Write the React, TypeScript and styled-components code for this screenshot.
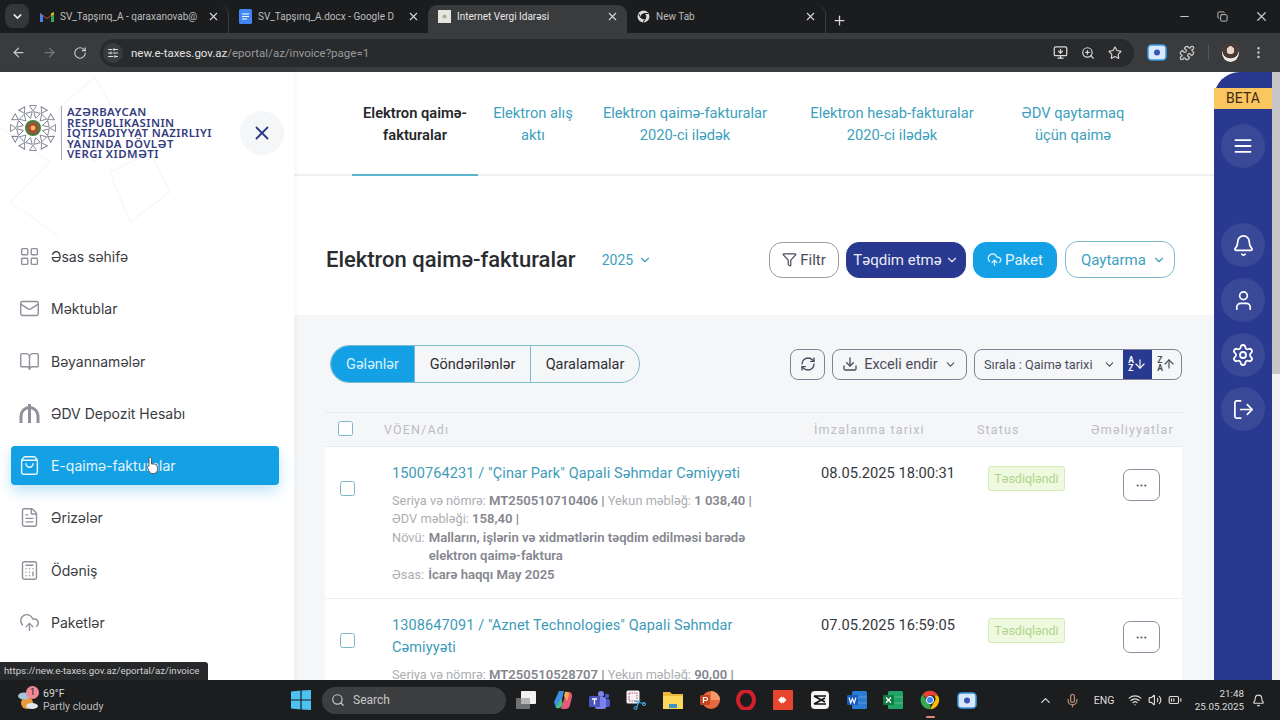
import React from "react";
import styled, { createGlobalStyle } from "styled-components";
import {
    AlignJustify,
    ArrowDown,
    ArrowLeft,
    ArrowRight,
    ArrowUp,
    Bell,
    BookOpen,
    Calculator,
    ChevronDown,
    ChevronUp,
    CloudUpload,
    Copy,
    Download,
    Ellipsis,
    FileText,
    Filter,
    LayoutGrid,
    LogOut,
    Mail,
    Mic,
    Minus,
    MoreVertical,
    Plus,
    Puzzle,
    RefreshCw,
    RotateCw,
    Search,
    Settings,
    ShoppingBag,
    SlidersHorizontal,
    Star,
    User,
    Volume2,
    Wifi,
    X,
    ZoomIn,
    MonitorDown,
    BatteryMedium,
} from "lucide-react";

const GlobalStyle = createGlobalStyle`
    html, body {
        margin: 0;
        padding: 0;
        background: #fff;
    }
    * {
        box-sizing: border-box;
    }
`;

const Screen = styled.div`
    width: 1280px;
    height: 720px;
    display: flex;
    flex-direction: column;
    overflow: hidden;
    position: relative;
    font-family: Roboto, "Liberation Sans", sans-serif;
`;

/* browser chrome */
const TabStrip = styled.div`
    height: 33px;
    background: #1b1c1e;
    display: flex;
    align-items: flex-end;
    padding-left: 5px;
    flex-shrink: 0;
`;

const TabSearch = styled.div`
    width: 24px;
    height: 24px;
    margin: 0 1px 5px 0;
    border-radius: 8px;
    background: #35363a;
    color: #e6e6e6;
    display: flex;
    align-items: center;
    justify-content: center;
`;

const BrowserTab = styled.div<{ $active?: boolean; $sep?: boolean }>`
    width: 199px;
    height: 28px;
    padding: 0 8px 5px 10px;
    display: flex;
    align-items: center;
    gap: 6px;
    font-size: 10px;
    color: ${(p) => (p.$active ? "#e8e8e8" : "#bdbdbd")};
    background: ${(p) => (p.$active ? "#3a3b3d" : "transparent")};
    border-radius: 9px 9px 0 0;
    border-right: ${(p) => (p.$sep ? "1px solid #3c3d3f" : "0")};
    flex-shrink: 0;
`;

const TabTitle = styled.span`
    flex: 1;
    white-space: nowrap;
    overflow: hidden;
`;

const TabClose = styled(X)`
    color: #d8d8d8;
    flex-shrink: 0;
`;

const NewTab = styled.div`
    margin: 0 0 5px 6px;
    color: #d8d8d8;
    display: flex;
`;

const WindowControls = styled.div`
    margin-left: auto;
    display: flex;
    align-items: center;
    gap: 26px;
    padding: 0 11px 9px 0;
    color: #c8c8c8;
`;

const ToolBar = styled.div`
    height: 39px;
    background: #3a3b3d;
    display: flex;
    align-items: center;
    padding: 0 8px 0 11px;
    color: #c9c9c9;
    flex-shrink: 0;
`;

const NavIcons = styled.div`
    display: flex;
    align-items: center;
    gap: 16px;
    width: 81px;
`;

const AddressBar = styled.div`
    width: 1034px;
    height: 28px;
    margin-left: 8px;
    padding: 0 12px 0 3px;
    background: #282a2c;
    border-radius: 14px;
    display: flex;
    align-items: center;
    font-size: 11.5px;
    color: #9a9b9d;
`;

const SiteChip = styled.div`
    width: 20px;
    height: 20px;
    margin-right: 8px;
    border-radius: 50%;
    background: #3a3b3d;
    color: #e0e0e0;
    display: flex;
    align-items: center;
    justify-content: center;
`;

const Host = styled.span`
    color: #e4e4e4;
`;

const AddressIcons = styled.div`
    margin-left: auto;
    display: flex;
    align-items: center;
    gap: 13px;
    color: #d8d8d8;
`;

const ToolRight = styled.div`
    margin-left: 13px;
    display: flex;
    align-items: center;
    gap: 12px;
`;

const ToolDivider = styled.div`
    width: 1px;
    height: 15px;
    margin: 0 1px;
    background: #55565a;
`;

const Avatar = styled.div`
    width: 17px;
    height: 19px;
    border-radius: 50%;
    background: radial-gradient(circle at 50% 38%, #e6d6c8 0 26%, #4a3a35 28% 55%, #ece8e3 58%);
`;

/* page */
const Body = styled.div`
    flex: 1;
    min-height: 0;
    display: flex;
    background: #fff;
`;

const Sidebar = styled.aside`
    width: 294px;
    flex-shrink: 0;
    position: relative;
    background: #fff;
    box-shadow: 1px 0 6px rgba(40, 50, 80, 0.05);
    z-index: 1;
`;

const SidebarArt = styled.svg`
    position: absolute;
    left: 0;
    top: 0;
`;

const LogoRow = styled.div`
    height: 165px;
    padding: 32px 11px 0 9px;
    display: flex;
    align-items: flex-start;
    position: relative;
`;

const LogoDivider = styled.div`
    width: 1px;
    height: 54px;
    margin: 2px 5px 0 4px;
    background: #a9abb5;
`;

const LogoText = styled.div`
    font-family: "Noto Sans", Roboto, sans-serif;
    font-size: 11.4px;
    line-height: 10.6px;
    font-weight: 600;
    letter-spacing: 0.42px;
    color: #343c80;
    text-transform: uppercase;
    padding-top: 3px;
    white-space: nowrap;
`;

const CloseBtn = styled.div`
    position: absolute;
    left: 240px;
    top: 39px;
    width: 44px;
    height: 44px;
    border-radius: 50%;
    background: #f5f6f8;
    color: #2f3a86;
    display: flex;
    align-items: center;
    justify-content: center;
`;

const Nav = styled.nav`
    display: flex;
    flex-direction: column;
    gap: 13.25px;
    padding: 0 15px 0 11px;
    position: relative;
`;

const NavItem = styled.div<{ $active?: boolean }>`
    height: 39px;
    padding-left: 8px;
    display: flex;
    align-items: center;
    gap: 11px;
    border-radius: 4px;
    font-family: Inter, Roboto, sans-serif;
    font-size: 14px;
    color: ${(p) => (p.$active ? "#e4f5fd" : "#3a3b42")};
    background: ${(p) => (p.$active ? "#14a0e4" : "transparent")};
    box-shadow: ${(p) => (p.$active ? "0 6px 14px rgba(20, 160, 228, 0.28)" : "none")};

    svg {
        color: ${(p) => (p.$active ? "#e9f7fe" : "#8f909c")};
        flex-shrink: 0;
    }
`;

const Cursor = styled.svg`
    position: absolute;
    left: 147px;
    top: 220px;
`;

const StatusBubble = styled.div`
    position: absolute;
    left: 0;
    top: 662px;
    width: 208px;
    height: 18px;
    padding-left: 4px;
    background: #27282a;
    border-radius: 0 3px 0 0;
    font-size: 9.7px;
    line-height: 18px;
    color: #cfd0d2;
    white-space: nowrap;
    z-index: 3;
`;

const Main = styled.main`
    flex: 1;
    min-width: 0;
    display: flex;
    flex-direction: column;
    overflow: hidden;
`;

const TopTabs = styled.div`
    height: 104px;
    flex-shrink: 0;
    padding-left: 58px;
    display: flex;
    border-bottom: 2px solid #eeeff1;
`;

const TopTab = styled.div<{ $active?: boolean; $w: number }>`
    width: ${(p) => p.$w}px;
    height: 104px;
    padding-top: 30px;
    text-align: center;
    font-size: 14.7px;
    line-height: 22px;
    font-weight: ${(p) => (p.$active ? 600 : 400)};
    color: ${(p) => (p.$active ? "#26272b" : "#3d9fbd")};
    border-bottom: 2px solid ${(p) => (p.$active ? "#5cb4cc" : "transparent")};
`;

const PageHeader = styled.div`
    height: 139px;
    flex-shrink: 0;
    padding: 28px 39px 0 32px;
    display: flex;
    align-items: center;
`;

const PageTitle = styled.h1`
    margin: 0;
    font-size: 22px;
    font-weight: 500;
    color: #2b2c30;
`;

const YearPicker = styled.div`
    margin-left: 26px;
    display: flex;
    align-items: center;
    gap: 5px;
    font-size: 14px;
    color: #3d9fbd;
`;

const HeaderActions = styled.div`
    margin-left: auto;
    display: flex;
    align-items: center;
    gap: 7px;
`;

const ActionBtn = styled.div<{ $w: number; $bg: string; $fg: string; $line: string }>`
    width: ${(p) => p.$w}px;
    height: 36px;
    border-radius: 13px;
    border: 1px solid ${(p) => p.$line};
    background: ${(p) => p.$bg};
    color: ${(p) => p.$fg};
    font-size: 15px;
    display: flex;
    align-items: center;
    justify-content: center;
    gap: 3px;
`;

const ReturnBtn = styled(ActionBtn)`
    height: 37px;
    justify-content: flex-start;
    padding-left: 15px;
    gap: 6px;
    margin-left: 1px;
`;

const Panel = styled.section`
    flex: 1;
    min-height: 0;
    background: #f5f6f8;
    padding: 30px 32px 0 31px;
    overflow: hidden;
`;

const PanelBar = styled.div`
    height: 38px;
    padding-left: 5px;
    display: flex;
    align-items: center;
`;

const Segments = styled.div`
    display: flex;
    height: 38px;
    border: 1px solid #7dbccf;
    border-radius: 19px;
    overflow: hidden;
`;

const Segment = styled.div<{ $w: number; $active?: boolean }>`
    width: ${(p) => p.$w}px;
    display: flex;
    align-items: center;
    justify-content: center;
    font-size: 14.5px;
    color: ${(p) => (p.$active ? "#d6f0fc" : "#2e2f33")};
    background: ${(p) => (p.$active ? "#14a0e4" : "transparent")};
    & + & {
        border-left: 1px solid #7dbccf;
    }
`;

const PanelTools = styled.div`
    margin-left: auto;
    display: flex;
    align-items: center;
    gap: 7px;
`;

const ToolBtn = styled.div<{ $w: number }>`
    width: ${(p) => p.$w}px;
    height: 31px;
    border: 1px solid #7f8296;
    border-radius: 8px;
    display: flex;
    align-items: center;
    justify-content: center;
    gap: 6px;
    font-size: 14.5px;
    color: #4a4c5c;
    svg {
        flex-shrink: 0;
    }
`;

const SortBox = styled.div`
    width: 208px;
    height: 31px;
    border: 1px solid #7f8296;
    border-radius: 8px;
    overflow: hidden;
    display: flex;
    align-items: center;
    font-size: 12.7px;
    color: #4a4c5c;
`;

const SortLabel = styled.div`
    flex: 1;
    padding: 0 7px 0 9px;
    display: flex;
    align-items: center;
    justify-content: space-between;
`;

const SortBtn = styled.div<{ $active?: boolean }>`
    width: 29px;
    height: 100%;
    display: flex;
    align-items: center;
    justify-content: center;
    background: ${(p) => (p.$active ? "#2a3990" : "transparent")};
    color: ${(p) => (p.$active ? "#fff" : "#4a4c5c")};
`;

const SortLetters = styled.span`
    display: flex;
    flex-direction: column;
    font-size: 8.5px;
    line-height: 8.5px;
    font-weight: 700;
    margin-right: -1px;
`;

const TableHead = styled.div`
    margin-top: 29px;
    height: 35px;
    display: flex;
    align-items: center;
    border-top: 1px solid #e9eaec;
    border-bottom: 1px solid #e9eaec;
    font-size: 12.5px;
    letter-spacing: 1.15px;
    color: #bcbdc2;
`;

const HeadCell = styled.div<{ $w: number }>`
    width: ${(p) => p.$w}px;
    flex-shrink: 0;
`;

const Check = styled.div<{ $head?: boolean }>`
    width: 15px;
    height: 15px;
    border: 1.3px solid #7ab8c8;
    border-radius: 2.5px;
    background: #fff;
    flex-shrink: 0;
    margin: ${(p) => (p.$head ? "-3px 31px 0 13px" : "33px 37px 0 15px")};
`;

const Row = styled.div`
    background: #fff;
    display: flex;
    align-items: flex-start;
    padding-top: 1px;
    border-bottom: 1px solid #eeeff1;
`;

const RowInfo = styled.div`
    width: 429px;
    flex-shrink: 0;
    padding: 15px 0 14px;
`;

const RowTitle = styled.div`
    font-size: 14.5px;
    line-height: 22px;
    letter-spacing: 0.1px;
    color: #3d9bb8;
    margin-bottom: 7px;
`;

const Meta = styled.div`
    font-size: 12.8px;
    line-height: 18.4px;
    color: #adaeb3;
    display: flex;
    gap: 4px;
`;

const MetaLine = styled.div`
    font-size: 12.8px;
    line-height: 18.4px;
    color: #adaeb3;
    white-space: nowrap;
`;

const Strong = styled.b`
    font-size: 13.1px;
    font-weight: 600;
    color: #85868f;
`;

const RowDate = styled.div`
    width: 167px;
    padding-top: 15px;
    font-size: 14.7px;
    line-height: 20px;
    color: #36373b;
    flex-shrink: 0;
`;

const Badge = styled.div`
    width: 77px;
    height: 25px;
    margin-top: 18px;
    background: #eff9df;
    border: 1px solid #d6ecb8;
    border-radius: 3px;
    font-size: 12.5px;
    line-height: 23px;
    text-align: center;
    color: #afd48a;
    flex-shrink: 0;
`;

const MoreBtn = styled.div`
    width: 37px;
    height: 32px;
    margin: 21px 0 0 58px;
    border: 1px solid #8c8e9c;
    border-radius: 7px;
    color: #5a5c68;
    display: flex;
    align-items: center;
    justify-content: center;
    flex-shrink: 0;
`;

const Rail = styled.aside`
    width: 58px;
    flex-shrink: 0;
    background: #2a3990;
    border-top-left-radius: 26px;
    padding-top: 16px;
    display: flex;
    flex-direction: column;
    align-items: center;
`;

const BetaTag = styled.div`
    width: 100%;
    height: 21px;
    background: #fbc660;
    color: #3b2a10;
    font-size: 14px;
    line-height: 21px;
    text-align: center;
`;

const RailBtn = styled.div<{ $gap: number }>`
    width: 44px;
    height: 44px;
    margin-top: ${(p) => p.$gap}px;
    border-radius: 50%;
    background: rgba(255, 255, 255, 0.08);
    color: #fff;
    display: flex;
    align-items: center;
    justify-content: center;
`;

const ScrollTrack = styled.div`
    width: 8px;
    flex-shrink: 0;
    background: #f1f1f1;
`;

const ScrollThumb = styled.div`
    height: 302px;
    background: #c6c6c6;
`;

/* taskbar */
const Taskbar = styled.footer`
    height: 40px;
    flex-shrink: 0;
    background: #1c1d1f;
    display: flex;
    align-items: center;
    color: #e8e8e8;
    position: relative;
`;

const Weather = styled.div`
    width: 291px;
    padding-left: 17px;
    display: flex;
    align-items: center;
    gap: 4px;
    font-size: 10.5px;
    line-height: 13.5px;
    color: #d8d8d8;
    position: relative;
`;

const WeatherBadge = styled.span`
    position: absolute;
    left: 26px;
    top: -1px;
    width: 13px;
    height: 13px;
    border-radius: 50%;
    background: #ef8a94;
    color: #2a1a1a;
    font-size: 9px;
    line-height: 13px;
    text-align: center;
`;

const WeatherSub = styled.div`
    color: #b9b9b9;
`;

const Apps = styled.div`
    display: flex;
    align-items: center;
`;

const AppSlot = styled.div<{ $on?: boolean }>`
    width: 36.7px;
    height: 40px;
    display: flex;
    align-items: center;
    justify-content: center;
    position: relative;
    &::after {
        content: "";
        display: ${(p) => (p.$on ? "block" : "none")};
        position: absolute;
        bottom: 2px;
        left: 14px;
        width: 9px;
        height: 2px;
        border-radius: 1px;
        background: #e08a78;
    }
`;

const SearchBox = styled.div`
    width: 184px;
    height: 27px;
    margin: 0 2px 0 11px;
    padding-left: 9px;
    border-radius: 14px;
    background: #3d3e40;
    display: flex;
    align-items: center;
    gap: 8px;
    font-size: 12px;
    color: #c8c8c8;
`;

const Tray = styled.div`
    position: absolute;
    left: 1037px;
    top: 0;
    height: 40px;
    display: flex;
    align-items: center;
    color: #dcdcdc;
`;

const TraySlot = styled.div<{ $w: number; $ml?: number }>`
    width: ${(p) => p.$w}px;
    margin-left: ${(p) => p.$ml ?? 0}px;
    display: flex;
    justify-content: center;
    font-size: 10.5px;
`;

const Clock = styled.div`
    width: 56px;
    margin-left: 3px;
    text-align: right;
    font-size: 9.8px;
    line-height: 13px;
`;

const GmailIcon = () => (
    <svg width="14" height="12" viewBox="0 0 14 12">
        <path d="M0 2 L7 7 L14 2 V11 H11 V5 L7 8 L3 5 V11 H0 Z" fill="#ea4335" />
        <path d="M0 2 V11 H3 V5 Z" fill="#4285f4" />
        <path d="M14 2 V11 H11 V5 Z" fill="#34a853" />
        <path d="M11 2.5 L14 1 V3 L11 5 Z" fill="#fbbc04" />
    </svg>
);

const DocsIcon = () => (
    <svg width="13" height="15" viewBox="0 0 13 15">
        <rect width="13" height="15" rx="1.5" fill="#4285f4" />
        <path d="M3 5h7M3 7.5h7M3 10h5" stroke="#fff" strokeWidth="1.2" />
    </svg>
);

const PageFavicon = () => (
    <svg width="13" height="13" viewBox="0 0 13 13">
        <rect width="13" height="13" fill="#e6e6df" />
        <circle cx="6.5" cy="6.5" r="2" fill="#a8ad93" />
    </svg>
);

const ChromeIcon = ({ size = 13 }: { size?: number }) => (
    <svg width={size} height={size} viewBox="0 0 24 24">
        <path d="M12 1a11 11 0 0 1 9.5 5.5H12a5.5 5.5 0 0 0-5 3.2L3.3 5A11 11 0 0 1 12 1z" fill="#ea4335" />
        <path d="M21.5 6.5A11 11 0 0 1 12 23l4.7-8.2a5.5 5.5 0 0 0 0-8.3z" fill="#fbbc04" />
        <path d="M3.3 5L8 13.2a5.5 5.5 0 0 0 5 4.2L12 23A11 11 0 0 1 3.3 5z" fill="#34a853" />
        <circle cx="12" cy="12" r="4.4" fill="#4285f4" stroke="#fff" strokeWidth="1.2" />
    </svg>
);

const GreyChromeIcon = () => (
    <svg width="13" height="13" viewBox="0 0 24 24">
        <circle cx="12" cy="12" r="11" fill="#d8d8d8" />
        <circle cx="12" cy="12" r="5" fill="#1b1c1e" />
        <path d="M12 6.5h9M7.5 15L3 7M16 15l-4.5 7.5" stroke="#1b1c1e" strokeWidth="1.8" />
    </svg>
);

const Emblem = () => {
    const outer = Array.from({ length: 12 }, (_, i) => i * 30);
    const inner = Array.from({ length: 12 }, (_, i) => i * 30 + 15);
    return (
        <svg width="48" height="48" viewBox="0 0 48 48">
            {outer.map((a) => (
                <path
                    key={a}
                    transform={`rotate(${a} 24 24)`}
                    d="M20.5 1.5 L27.5 1.5 L24 7 Z"
                    fill="none"
                    stroke="#7f8292"
                    strokeWidth="0.9"
                />
            ))}
            {inner.map((a) => (
                <path
                    key={a}
                    transform={`rotate(${a} 24 24)`}
                    d="M20.5 8 L27.5 8 L24 14 Z"
                    fill="none"
                    stroke="#7f8292"
                    strokeWidth="0.9"
                />
            ))}
            <circle cx="24" cy="24" r="8" fill="#4f7a3a" />
            <circle cx="24" cy="24" r="5.2" fill="#b8433a" />
            <circle cx="24" cy="24" r="2.4" fill="#e9c65a" />
        </svg>
    );
};

const DramIcon = () => (
    <svg width="21" height="21" viewBox="0 0 21 21" fill="none" stroke="currentColor" strokeWidth="3">
        <path d="M2 20 V13 A8.5 8.5 0 0 1 19 13 V20" />
        <path d="M10.5 1 V20" />
    </svg>
);

const HandCursor = () => (
    <Cursor width="11" height="17" viewBox="0 0 11 17">
        <path
            d="M2 1.5 a1.2 1.2 0 0 1 2.4 0 V7 h3 a3 3 0 0 1 3 3 v3 a3.5 3.5 0 0 1-3.5 3.5 H5 a3 3 0 0 1-2.6-1.6 L.5 10.5 C0 9 1.4 8.4 2 9.4 Z"
            fill="#fff"
            stroke="#3a3b42"
            strokeWidth="0.8"
        />
    </Cursor>
);

const WinLogo = () => (
    <svg width="20" height="20" viewBox="0 0 20 20">
        <path d="M0 1.5 L9.4 0.6 V9.4 H0 Z M10.6 0.5 L20 0 V9.4 H10.6 Z M0 10.6 H9.4 V19.4 L0 18.5 Z M10.6 10.6 H20 V20 L10.6 19.5 Z" fill="#4cc2f1" />
    </svg>
);

const TaskView = () => (
    <svg width="20" height="18" viewBox="0 0 20 18">
        <rect x="0" y="7" width="14" height="11" rx="1" fill="#6f7072" />
        <rect x="5" y="0" width="15" height="13" rx="1" fill="#f2f2f2" />
        <rect x="5" y="7" width="9" height="6" fill="#b5b5b5" />
    </svg>
);

const Copilot = () => (
    <svg width="20" height="20" viewBox="0 0 20 20">
        <path d="M6 1 H11 L8 14 A5 5 0 0 1 3 18 L1 12 Z" fill="#3f8fe8" />
        <path d="M3 18 C6 19 9 18 10 14 L8 8 L5 14 Z" fill="#48c07a" />
        <path d="M14 2 A4 4 0 0 1 19 7 L17 15 A5 5 0 0 1 12 19 H8 L12 6 Z" fill="#e8587a" />
        <path d="M12 2 C14 1 16 2 16 5 L14 11 L11 6 Z" fill="#f0b23f" />
    </svg>
);

const Teams = () => (
    <svg width="21" height="19" viewBox="0 0 21 19">
        <circle cx="12" cy="3" r="3" fill="#7b83eb" />
        <circle cx="18" cy="5" r="2.2" fill="#5059c9" />
        <rect x="14" y="8" width="7" height="8" rx="2" fill="#5059c9" />
        <rect x="6" y="6" width="11" height="12" rx="2" fill="#7b83eb" />
        <rect x="0" y="5" width="11" height="11" rx="1.5" fill="#4b53bc" />
        <path d="M3 8 H8 M5.5 8 V13.5" stroke="#fff" strokeWidth="1.4" />
    </svg>
);

const Snip = () => (
    <svg width="20" height="20" viewBox="0 0 20 20" fill="none">
        <rect x="0.5" y="0.5" width="13" height="13" rx="1.5" fill="#f4f4f4" />
        <rect x="3" y="3" width="8" height="8" fill="#f4f4f4" stroke="#c0455a" strokeDasharray="1.5 1" />
        <path d="M10 19 L14 9 M19 14 L8 11" stroke="#38a9d8" strokeWidth="1.2" />
        <circle cx="9.5" cy="18" r="1.6" stroke="#38a9d8" />
        <circle cx="18" cy="14" r="1.6" stroke="#38a9d8" />
    </svg>
);

const Folder = () => (
    <svg width="20" height="18" viewBox="0 0 20 18">
        <path d="M0 1 H7 L9 3 H20 V17 H0 Z" fill="#e8b93a" />
        <rect y="5" width="20" height="13" fill="#fbd85c" />
        <rect x="6" y="13" width="8" height="4" fill="#3d91c8" />
    </svg>
);

const Ppt = () => (
    <svg width="20" height="20" viewBox="0 0 20 20">
        <circle cx="11" cy="10" r="9" fill="#e8693f" />
        <path d="M11 1 A9 9 0 0 1 20 10 H11 Z" fill="#f39a6b" />
        <rect x="0" y="5" width="10" height="10" rx="1.5" fill="#c4441f" />
        <path d="M3.5 13 V7.5 H6 A1.5 1.5 0 0 1 6 10.5 H3.5" fill="none" stroke="#fff" strokeWidth="1.2" />
    </svg>
);

const Opera = () => (
    <svg width="20" height="20" viewBox="0 0 20 20">
        <ellipse cx="10" cy="10" rx="8" ry="9" fill="none" stroke="#d3202c" strokeWidth="4" />
    </svg>
);

const AnyDesk = () => (
    <svg width="20" height="20" viewBox="0 0 20 20">
        <rect width="20" height="20" rx="1" fill="#e8452f" />
        <path d="M5 10 L8.5 6.5 L12 10 L8.5 13.5 Z M10 6.5 L13.5 10 L10 13.5" fill="#fff" />
    </svg>
);

const CapCut = () => (
    <svg width="18" height="18" viewBox="0 0 18 18">
        <rect width="18" height="18" rx="4" fill="#f5f5f5" />
        <path d="M3 5 L14 11 M3 13 L14 7 M3 5 H15 M3 13 H15" stroke="#111" strokeWidth="1.7" fill="none" />
    </svg>
);

const OfficeDoc = ({ back, front, letter }: { back: string; front: string; letter: string }) => (
    <svg width="20" height="20" viewBox="0 0 20 20">
        <rect x="5" y="1" width="15" height="18" rx="1.5" fill={back} />
        <path d="M5 7 H20 M5 13 H20" stroke="rgba(255,255,255,.25)" />
        <rect x="0" y="5" width="11" height="10" rx="1.2" fill={front} />
        {letter === "W" ? (
            <path d="M2 7.5 L3.7 13 L5.5 8.5 L7.2 13 L9 7.5" fill="none" stroke="#fff" strokeWidth="1.1" />
        ) : (
            <path d="M3 7.5 L8 12.8 M8 7.5 L3 12.8" fill="none" stroke="#fff" strokeWidth="1.3" />
        )}
    </svg>
);

const Recorder = () => (
    <svg width="20" height="17" viewBox="0 0 20 17">
        <rect x="1" y="1" width="18" height="15" rx="3.5" fill="#dbe8fb" stroke="#3a9ae0" strokeWidth="1.6" />
        <circle cx="10" cy="8.5" r="3" fill="#3656b8" />
    </svg>
);

const SidebarPattern = () => (
    <SidebarArt width="294" height="165" viewBox="0 0 294 165" fill="none" stroke="#f8f8fa" strokeWidth="1.5">
        <path d="M60 35 L95 5 L120 50 L95 90 L60 70 Z" />
        <path d="M0 55 L50 90 L10 130 L60 165" />
        <path d="M110 100 L150 80 L170 120 L130 150 Z" />
    </SidebarArt>
);

const navItems = [
    { label: "Əsas səhifə", icon: <LayoutGrid size={21} strokeWidth={1.6} /> },
    { label: "Məktublar", icon: <Mail size={21} strokeWidth={1.6} /> },
    { label: "Bəyannamələr", icon: <BookOpen size={21} strokeWidth={1.6} /> },
    { label: "ƏDV Depozit Hesabı", icon: <DramIcon /> },
    { label: "E-qaimə-fakturalar", icon: <ShoppingBag size={21} strokeWidth={1.6} />, active: true },
    { label: "Ərizələr", icon: <FileText size={21} strokeWidth={1.6} /> },
    { label: "Ödəniş", icon: <Calculator size={21} strokeWidth={1.6} /> },
    { label: "Paketlər", icon: <CloudUpload size={21} strokeWidth={1.6} /> },
];

const topTabs = [
    { lines: ["Elektron qaimə-", "fakturalar"], w: 126, active: true },
    { lines: ["Elektron alış", "aktı"], w: 110 },
    { lines: ["Elektron qaimə-fakturalar", "2020-ci ilədək"], w: 194 },
    { lines: ["Elektron hesab-fakturalar", "2020-ci ilədək"], w: 220 },
    { lines: ["ƏDV qaytarmaq", "üçün qaimə"], w: 142 },
];

const taskApps = [
    <TaskView key="tv" />,
    <Copilot key="co" />,
    <Teams key="te" />,
    <Snip key="sn" />,
    <Folder key="fo" />,
    <Ppt key="pp" />,
    <Opera key="op" />,
    <AnyDesk key="an" />,
    <CapCut key="cc" />,
    <OfficeDoc key="wo" back="#2b7cd3" front="#185abd" letter="W" />,
    <OfficeDoc key="ex" back="#21a366" front="#107c41" letter="X" />,
];

export default function App() {
    return (
        <Screen>
            <GlobalStyle />
            <TabStrip>
                <TabSearch>
                    <ChevronDown size={13} strokeWidth={3} />
                </TabSearch>
                <BrowserTab $sep>
                    <GmailIcon />
                    <TabTitle>SV_Tapşırıq_A - qaraxanovab@</TabTitle>
                    <TabClose size={13} />
                </BrowserTab>
                <BrowserTab>
                    <DocsIcon />
                    <TabTitle>SV_Tapşırıq_A.docx - Google D</TabTitle>
                    <TabClose size={13} />
                </BrowserTab>
                <BrowserTab $active>
                    <PageFavicon />
                    <TabTitle>İnternet Vergi İdarəsi</TabTitle>
                    <TabClose size={13} />
                </BrowserTab>
                <BrowserTab $sep>
                    <GreyChromeIcon />
                    <TabTitle>New Tab</TabTitle>
                    <TabClose size={13} />
                </BrowserTab>
                <NewTab>
                    <Plus size={15} />
                </NewTab>
                <WindowControls>
                    <Minus size={13} />
                    <Copy size={11} />
                    <X size={15} />
                </WindowControls>
            </TabStrip>
            <ToolBar>
                <NavIcons>
                    <ArrowLeft size={15} />
                    <ArrowRight size={15} color="#77787a" />
                    <RotateCw size={14} />
                </NavIcons>
                <AddressBar>
                    <SiteChip>
                        <SlidersHorizontal size={12} />
                    </SiteChip>
                    <span>
                        <Host>new.e-taxes.gov.az</Host>/eportal/az/invoice?page=1
                    </span>
                    <AddressIcons>
                        <MonitorDown size={15} />
                        <ZoomIn size={14} />
                        <Star size={14} />
                    </AddressIcons>
                </AddressBar>
                <ToolRight>
                    <Recorder />
                    <Puzzle size={16} />
                    <ToolDivider />
                    <Avatar />
                    <MoreVertical size={15} />
                </ToolRight>
            </ToolBar>
            <Body>
                <Sidebar>
                    <SidebarPattern />
                    <LogoRow>
                        <Emblem />
                        <LogoDivider />
                        <LogoText>
                            Azərbaycan
                            <br />
                            Respublikasının
                            <br />
                            İqtisadiyyat Nazirliyi
                            <br />
                            yanında Dövlət
                            <br />
                            Vergi Xidməti
                        </LogoText>
                        <CloseBtn>
                            <X size={22} strokeWidth={2} />
                        </CloseBtn>
                    </LogoRow>
                    <Nav>
                        {navItems.map((item) => (
                            <NavItem key={item.label} $active={item.active}>
                                {item.icon}
                                {item.label}
                            </NavItem>
                        ))}
                        <HandCursor />
                    </Nav>
                </Sidebar>
                <Main>
                    <TopTabs>
                        {topTabs.map((tab) => (
                            <TopTab key={tab.lines[0]} $w={tab.w} $active={tab.active}>
                                {tab.lines[0]}
                                <br />
                                {tab.lines[1]}
                            </TopTab>
                        ))}
                    </TopTabs>
                    <PageHeader>
                        <PageTitle>Elektron qaimə-fakturalar</PageTitle>
                        <YearPicker>
                            2025 <ChevronDown size={14} />
                        </YearPicker>
                        <HeaderActions>
                            <ActionBtn $w={70} $bg="#fff" $fg="#4a4c5c" $line="#9a9ba3">
                                <Filter size={15} /> Filtr
                            </ActionBtn>
                            <ActionBtn $w={120} $bg="#2a3990" $fg="#e8eaf6" $line="#2a3990">
                                Təqdim etmə
                                <ChevronDown size={14} />
                            </ActionBtn>
                            <ActionBtn $w={84} $bg="#14a0e4" $fg="#e4f5fd" $line="#14a0e4">
                                <CloudUpload size={15} /> Paket
                            </ActionBtn>
                            <ReturnBtn $w={110} $bg="#fff" $fg="#3d9fbd" $line="#7dbccf">
                                Qaytarma
                                <ChevronDown size={14} />
                            </ReturnBtn>
                        </HeaderActions>
                    </PageHeader>
                    <Panel>
                        <PanelBar>
                            <Segments>
                                <Segment $w={83} $active>
                                    Gələnlər
                                </Segment>
                                <Segment $w={116}>Göndərilənlər</Segment>
                                <Segment $w={109}>Qaralamalar</Segment>
                            </Segments>
                            <PanelTools>
                                <ToolBtn $w={35}>
                                    <RefreshCw size={16} />
                                </ToolBtn>
                                <ToolBtn $w={135}>
                                    <Download size={16} /> Exceli endir <ChevronDown size={13} />
                                </ToolBtn>
                                <SortBox>
                                    <SortLabel>
                                        Sırala : Qaimə tarixi <ChevronDown size={13} />
                                    </SortLabel>
                                    <SortBtn $active>
                                        <SortLetters>
                                            <span>A</span>
                                            <span>Z</span>
                                        </SortLetters>
                                        <ArrowDown size={14} />
                                    </SortBtn>
                                    <SortBtn>
                                        <SortLetters>
                                            <span>Z</span>
                                            <span>A</span>
                                        </SortLetters>
                                        <ArrowUp size={14} />
                                    </SortBtn>
                                </SortBox>
                            </PanelTools>
                        </PanelBar>
                        <TableHead>
                            <Check $head />
                            <HeadCell $w={430}>VÖEN/Adı</HeadCell>
                            <HeadCell $w={163}>İmzalanma tarixi</HeadCell>
                            <HeadCell $w={114}>Status</HeadCell>
                            <HeadCell $w={91}>Əməliyyatlar</HeadCell>
                        </TableHead>
                        <Row>
                            <Check />
                            <RowInfo>
                                <RowTitle>1500764231 / "Çinar Park" Qapali Səhmdar Cəmiyyəti</RowTitle>
                                <MetaLine>
                                    Seriya və nömrə: <Strong>MT250510710406 |</Strong> Yekun məbləğ:{" "}
                                    <Strong>1 038,40 |</Strong>
                                </MetaLine>
                                <MetaLine>
                                    ƏDV məbləği: <Strong>158,40 |</Strong>
                                </MetaLine>
                                <Meta>
                                    <span>Növü:</span>
                                    <Strong>
                                        Malların, işlərin və xidmətlərin təqdim edilməsi barədə
                                        <br />
                                        elektron qaimə-faktura
                                    </Strong>
                                </Meta>
                                <Meta>
                                    <span>Əsas:</span>
                                    <Strong>İcarə haqqı May 2025</Strong>
                                </Meta>
                            </RowInfo>
                            <RowDate>08.05.2025 18:00:31</RowDate>
                            <Badge>Təsdiqləndi</Badge>
                            <MoreBtn>
                                <Ellipsis size={13} />
                            </MoreBtn>
                        </Row>
                        <Row>
                            <Check />
                            <RowInfo>
                                <RowTitle>
                                    1308647091 / "Aznet Technologies" Qapali Səhmdar
                                    <br />
                                    Cəmiyyəti
                                </RowTitle>
                                <MetaLine>
                                    Seriya və nömrə: <Strong>MT250510528707 |</Strong> Yekun məbləğ:{" "}
                                    <Strong>90,00 |</Strong>
                                </MetaLine>
                            </RowInfo>
                            <RowDate>07.05.2025 16:59:05</RowDate>
                            <Badge>Təsdiqləndi</Badge>
                            <MoreBtn>
                                <Ellipsis size={13} />
                            </MoreBtn>
                        </Row>
                    </Panel>
                </Main>
                <Rail>
                    <BetaTag>BETA</BetaTag>
                    <RailBtn $gap={15}>
                        <AlignJustify size={20} strokeWidth={2.2} />
                    </RailBtn>
                    <RailBtn $gap={55}>
                        <Bell size={23} strokeWidth={1.8} />
                    </RailBtn>
                    <RailBtn $gap={11}>
                        <User size={23} strokeWidth={1.8} />
                    </RailBtn>
                    <RailBtn $gap={11}>
                        <Settings size={24} strokeWidth={1.8} />
                    </RailBtn>
                    <RailBtn $gap={10}>
                        <LogOut size={23} strokeWidth={1.8} />
                    </RailBtn>
                </Rail>
                <ScrollTrack>
                    <ScrollThumb />
                </ScrollTrack>
            </Body>
            <StatusBubble>https://new.e-taxes.gov.az/eportal/az/invoice</StatusBubble>
            <Taskbar>
                <Weather>
                    <svg width="22" height="22" viewBox="0 0 22 22">
                        <circle cx="10" cy="14" r="6" fill="#e89a3c" />
                        <ellipse cx="7" cy="7" rx="6" ry="3.5" fill="#a9c2dc" />
                        <ellipse cx="15" cy="17" rx="6" ry="3" fill="#dfe7ef" />
                    </svg>
                    <WeatherBadge>1</WeatherBadge>
                    <div>
                        <div>69°F</div>
                        <WeatherSub>Partly cloudy</WeatherSub>
                    </div>
                </Weather>
                <Apps>
                    <WinLogo />
                    <SearchBox>
                        <Search size={14} />
                        Search
                    </SearchBox>
                    {taskApps.map((app) => (
                        <AppSlot key={app.key}>{app}</AppSlot>
                    ))}
                    <AppSlot $on>
                        <ChromeIcon size={20} />
                    </AppSlot>
                    <AppSlot>
                        <Recorder />
                    </AppSlot>
                </Apps>
                <Tray>
                    <TraySlot $w={16}>
                        <ChevronUp size={15} />
                    </TraySlot>
                    <TraySlot $w={38}>
                        <Mic size={15} color="#b98a70" />
                    </TraySlot>
                    <TraySlot $w={26}>ENG</TraySlot>
                    <TraySlot $w={20} $ml={8}>
                        <Wifi size={14} />
                    </TraySlot>
                    <TraySlot $w={20}>
                        <Volume2 size={14} />
                    </TraySlot>
                    <TraySlot $w={20}>
                        <BatteryMedium size={14} />
                    </TraySlot>
                    <Clock>
                        21:48
                        <br />
                        25.05.2025
                    </Clock>
                    <TraySlot $w={28}>
                        <Bell size={13} />
                    </TraySlot>
                </Tray>
            </Taskbar>
        </Screen>
    );
}
